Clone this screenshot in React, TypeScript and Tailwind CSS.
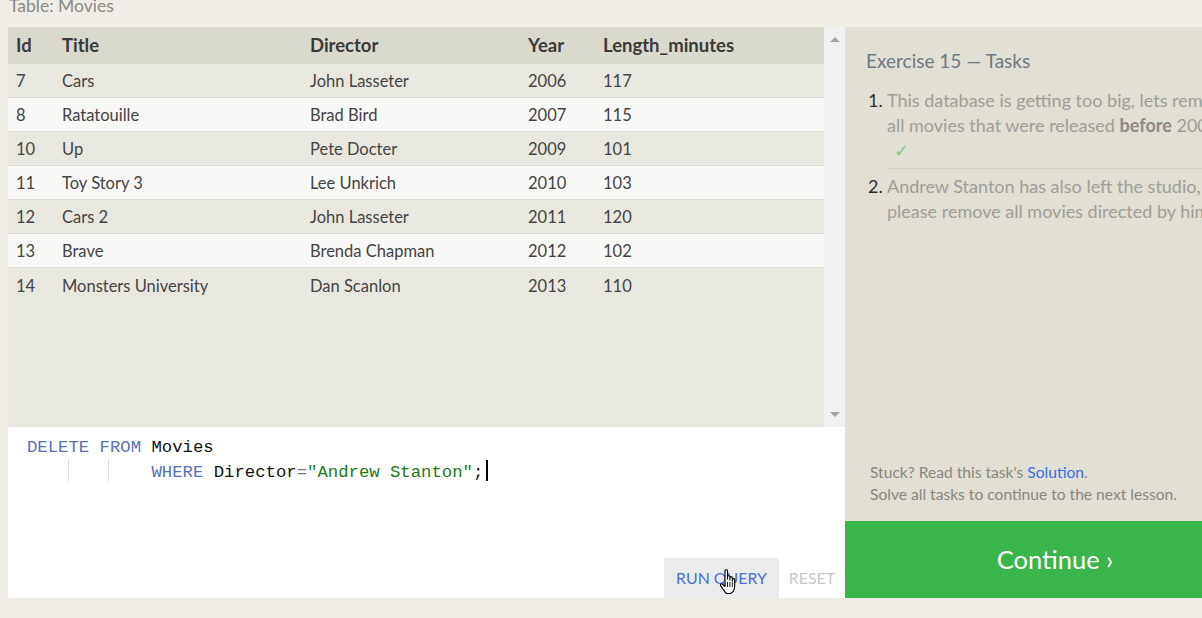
const movies = [
  { id: 7, title: 'Cars', director: 'John Lasseter', year: 2006, len: 117 },
  { id: 8, title: 'Ratatouille', director: 'Brad Bird', year: 2007, len: 115 },
  { id: 10, title: 'Up', director: 'Pete Docter', year: 2009, len: 101 },
  { id: 11, title: 'Toy Story 3', director: 'Lee Unkrich', year: 2010, len: 103 },
  { id: 12, title: 'Cars 2', director: 'John Lasseter', year: 2011, len: 120 },
  { id: 13, title: 'Brave', director: 'Brenda Chapman', year: 2012, len: 102 },
  { id: 14, title: 'Monsters University', director: 'Dan Scanlon', year: 2013, len: 110 },
];

const cols = 'grid grid-cols-[46px_248px_218px_75px_1fr]';

function HandCursor() {
  return (
    <svg width="20" height="28" viewBox="0 0 20 28" className="absolute left-[719px] top-[568px]">
      <path
        d="M6 2.5c0-1.1 2.5-1.1 2.5 0V11l0-2.5c0-1.1 2.4-1.1 2.4 0V12l0-2.3c0-1.1 2.4-1.1 2.4 0V13l0-1.6c0-1.1 2.4-1.1 2.4 0v6.5c0 3.5-1.7 6.1-4 7.6H7.5C5.8 24 3.5 20.5 1.6 17.6c-.7-1.1.5-2.4 1.6-1.5L6 18.5V2.5z"
        fill="#fff"
        stroke="#000"
        strokeWidth="1.1"
        strokeLinejoin="round"
      />
      <path d="M8.5 14v5M10.9 14v5M13.3 14v5" stroke="#000" strokeWidth="0.9" />
    </svg>
  );
}

export default function App() {
  return (
    <div className="relative w-[1202px] h-[618px] overflow-hidden bg-[#efede6] font-['Segoe_UI','Lato','Noto_Sans',sans-serif]">
      <div className="h-[27px] px-[9px]">
        <div className="relative -top-[4px] leading-[20px] text-[17.5px] text-[#8a8a85]">Table: Movies</div>
      </div>

      <div className="flex pl-[8px] h-[571px]">
        {/* left: results + editor */}
        <div className="w-[837px] flex flex-col">
          <div className="h-[400px] flex bg-[#e9e8e0]">
            <div className="w-[816px] text-[16.5px] text-[#444]">
              <div className={`${cols} h-[37px] pt-[1px] items-center bg-[#dad9ce] font-bold text-[18.5px] text-[#3a3a3a]`}>
                <div className="px-[8px]">Id</div>
                <div className="px-[8px]">Title</div>
                <div className="px-[8px]">Director</div>
                <div className="px-[8px]">Year</div>
                <div className="px-[8px]">Length_minutes</div>
              </div>
              {movies.map((m, i) => (
                <div
                  key={m.id}
                  className={`${cols} h-[34px] pt-[2px] items-center border-b border-[#dedcd5] ${
                    i % 2 === 0 ? 'bg-[#e9e8e0]' : 'bg-[#f8f8f7]'
                  } ${i === movies.length - 1 ? 'border-b-0' : ''}`}
                >
                  <div className="px-[8px]">{m.id}</div>
                  <div className="px-[8px]">{m.title}</div>
                  <div className="px-[8px]">{m.director}</div>
                  <div className="px-[8px]">{m.year}</div>
                  <div className="px-[8px]">{m.len}</div>
                </div>
              ))}
            </div>
            <div className="w-[21px] bg-[#f0f0f0] flex flex-col items-center justify-between py-[10px]">
              <div className="w-0 h-0 border-l-[5px] border-r-[5px] border-b-[5px] border-l-transparent border-r-transparent border-b-[#a3a3a3]" />
              <div className="w-0 h-0 border-l-[5px] border-r-[5px] border-t-[5px] border-l-transparent border-r-transparent border-t-[#a3a3a3]" />
            </div>
          </div>

          <div className="relative flex-1 bg-white">
            <div className="pt-[10px] pl-[19px] font-['Liberation_Mono',monospace] text-[17.3px] leading-[22.5px] whitespace-pre text-[#111]">
              <div>
                <span className="text-[#5b6fb8]">DELETE FROM</span> Movies
              </div>
              <div className="relative">
                <span className="absolute left-[41px] top-0 h-[22px] border-l border-dotted border-[#cfcfcf]" />
                <span className="absolute left-[81px] top-0 h-[22px] border-l border-dotted border-[#cfcfcf]" />
                {'            '}
                <span className="text-[#5b6fb8]">WHERE</span> Director<span className="text-[#777]">=</span>
                <span className="text-[#1d7a1d]">"Andrew Stanton"</span>;
                <span className="inline-block align-[-4px] ml-[3px] w-[2px] h-[21px] bg-black" />
              </div>
            </div>
            <div className="absolute right-0 bottom-0 flex items-stretch h-[40px] text-[15.9px]">
              <div className="w-[115px] bg-[#ebebeb] text-[#4a6fd8] flex items-center justify-center">RUN QUERY</div>
              <div className="w-[66px] text-[#c8c8c8] flex items-center justify-center">RESET</div>
            </div>
          </div>
        </div>

        {/* right: tasks */}
        <div className="w-[420px] shrink-0 bg-[#e2dfd4] flex flex-col">
          <div className="pl-[21px] pr-[20px] pt-[21px]">
            <div className="text-[19px] leading-[26px] text-[#6e7984]">Exercise 15 — Tasks</div>
            <ol className="mt-[14px] text-[18px] leading-[25px] text-[#a09e97] whitespace-nowrap">
              <li className="flex">
                <span className="w-[21px] text-[#2f2f2f] shrink-0 pl-[2px]">1.</span>
                <div className="flex-1 pb-[5px] border-b border-[#d2cfc5]">
                  <div>This database is getting too big, lets remove</div>
                  <div>
                    all movies that were released <b className="text-[#8c8a84]">before</b> 2005.
                  </div>
                  <div className="pl-[7px] text-[#7fcf8c]">✓</div>
                </div>
              </li>
              <li className="flex mt-[5px]">
                <span className="w-[21px] text-[#2f2f2f] shrink-0 pl-[2px]">2.</span>
                <div className="flex-1">
                  <div>Andrew Stanton has also left the studio, so</div>
                  <div>please remove all movies directed by him.</div>
                </div>
              </li>
            </ol>
          </div>
          <div className="flex-1" />
          <div className="pl-[25px] pb-[16px] text-[15.6px] leading-[22px] text-[#8a8780]">
            <div>
              Stuck? Read this task's <span className="text-[#3a6fe0]">Solution</span>.
            </div>
            <div>Solve all tasks to continue to the next lesson.</div>
          </div>
          <div className="h-[77px] bg-[#3ab54a] flex items-center justify-center text-white text-[25.5px]">
            Continue ›
          </div>
        </div>
      </div>

      <HandCursor />
    </div>
  );
}
